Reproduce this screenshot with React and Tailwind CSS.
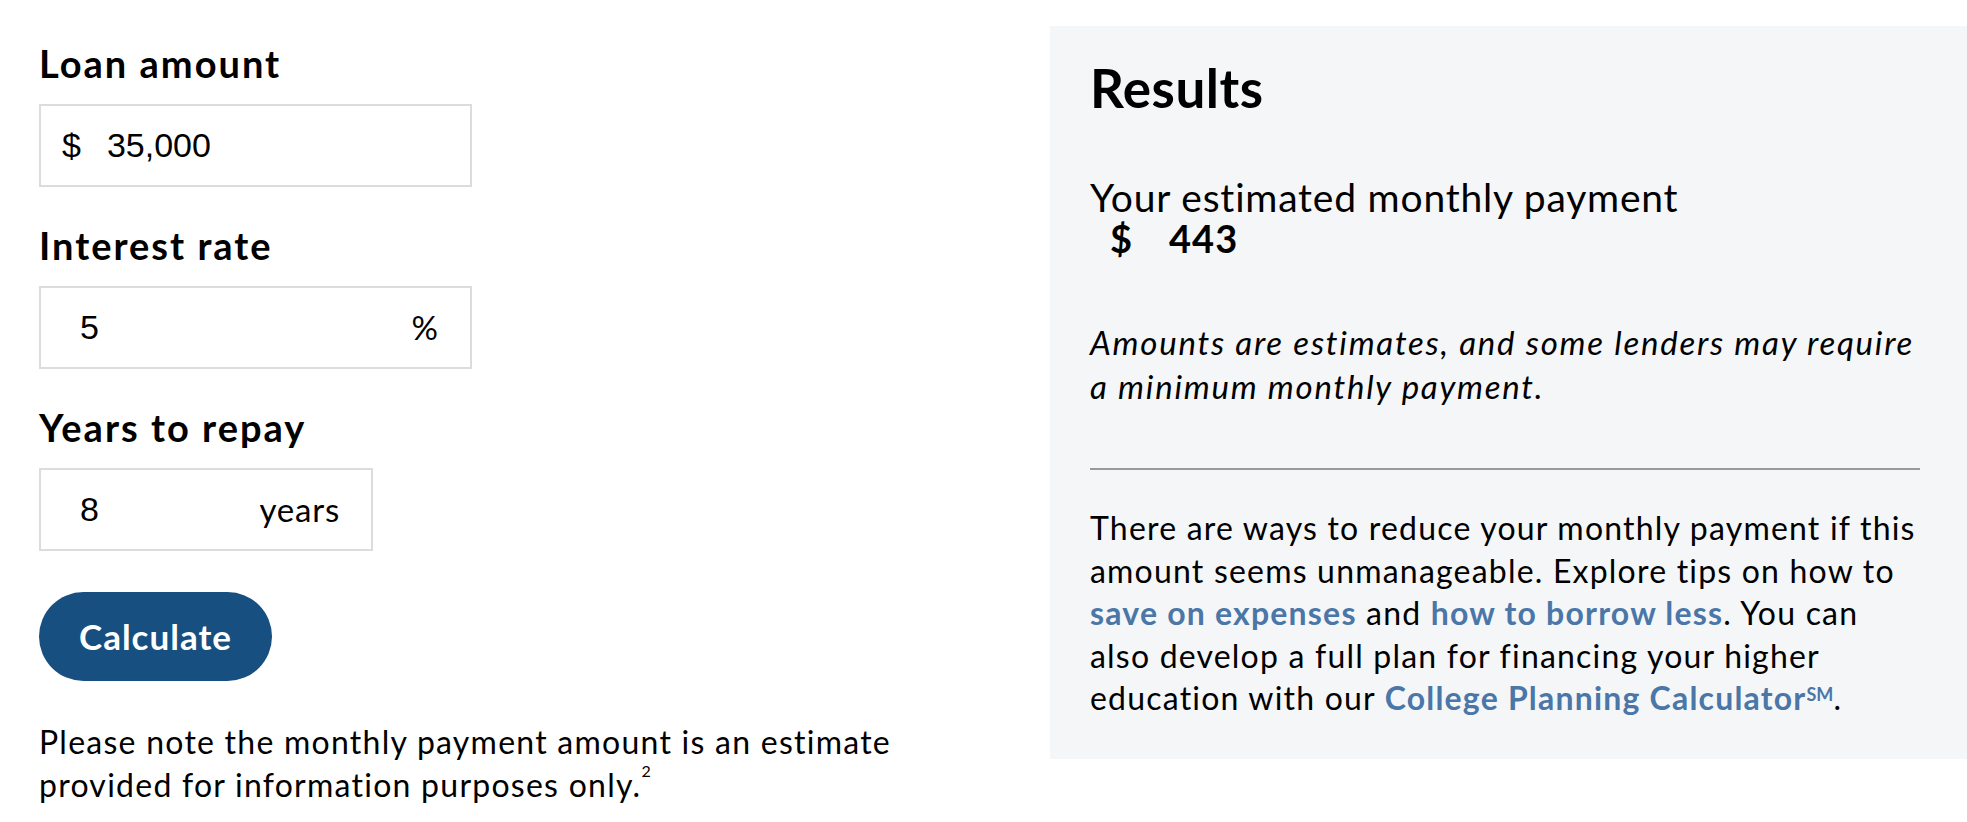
import React from 'react';

const Label = ({ children, className = '' }) => (
    <div className={`text-[38px] leading-[46px] font-bold tracking-[2px] text-black ${className}`}>{children}</div>
);

const App = () => {
    return (
        <div className="flex w-[1967px] h-[822px] bg-white font-['Lato',sans-serif] text-black overflow-hidden">
            {/* Form */}
            <div className="w-[1050px] pl-[39px] pt-[40px]">
                <Label>Loan amount</Label>
                <div className="mt-[18px] w-[433px] h-[83px] border-2 border-[#dcdcdc] flex items-center pl-[21px] font-['Liberation_Sans',sans-serif] text-[34px]">
                    <span>$</span>
                    <span className="ml-[26px]">35,000</span>
                </div>

                <Label className="mt-[35px]">Interest rate</Label>
                <div className="mt-[18px] w-[433px] h-[83px] border-2 border-[#dcdcdc] flex items-center justify-between pl-[39px] pr-[32px]">
                    <span className="font-['Liberation_Sans',sans-serif] text-[34px]">5</span>
                    <span className="text-[33px]">%</span>
                </div>

                <Label className="mt-[35px]">Years to repay</Label>
                <div className="mt-[18px] w-[334px] h-[83px] border-2 border-[#dcdcdc] flex items-center justify-between pl-[39px] pr-[31px]">
                    <span className="font-['Liberation_Sans',sans-serif] text-[34px]">8</span>
                    <span className="text-[33px] tracking-[0.8px]">years</span>
                </div>

                <button className="mt-[41px] h-[89px] px-[40px] rounded-full bg-[#174f80] text-white text-[35px] font-bold tracking-[1px]">
                    Calculate
                </button>

                <p className="mt-[39px] text-[32px] leading-[43px] tracking-[1.25px] w-[900px]">
                    Please note the monthly payment amount is an estimate provided for information purposes only.
                    <sup className="text-[16px] align-super">2</sup>
                </p>
            </div>

            {/* Results */}
            <div className="flex-1 mt-[26px] mb-[63px] bg-[#f5f6f8] pl-[40px] pr-[47px] pt-[30px]">
                <h2 className="text-[53px] leading-[64px] font-bold tracking-[0.5px]">Results</h2>
                <div className="mt-[54px] text-[39px] leading-[46px] tracking-[0.8px]">Your estimated monthly payment</div>
                <div className="-mt-[4px] flex text-[38px] leading-[44px] font-bold tracking-[1px] pl-[20px]">
                    <span>$</span>
                    <span className="ml-[36px]">443</span>
                </div>
                <p className="mt-[60px] italic text-[33px] leading-[44px] tracking-[1.75px]">
                    Amounts are estimates, and some lenders may require a minimum monthly payment.
                </p>
                <div className="mt-[60px] h-[2px] bg-[#999999]" />
                <p className="mt-[37px] text-[32px] leading-[42.5px] tracking-[1.2px]">
                    There are ways to reduce your monthly payment if this amount seems unmanageable. Explore tips on how to{' '}
                    <a href="#" className="font-bold text-[#4a76a8]">save on expenses</a> and{' '}
                    <a href="#" className="font-bold text-[#4a76a8]">how to borrow less</a>. You can also develop a full plan for financing your higher education with our{' '}
                    <a href="#" className="font-bold text-[#4a76a8]">College Planning Calculator<sup className="text-[18px] tracking-normal">SM</sup></a>.
                </p>
            </div>
        </div>
    );
};

export default App;
